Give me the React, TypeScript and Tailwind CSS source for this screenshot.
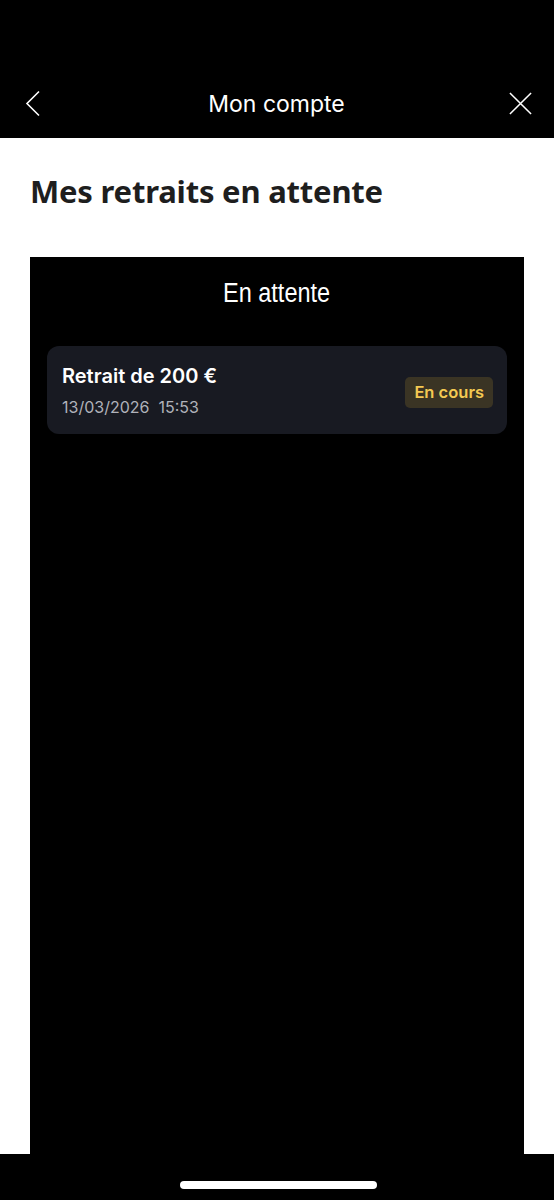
export default function App() {
    return (
        <div className="flex h-[1200px] w-[554px] flex-col bg-white" style={{ fontFamily: "'Noto Sans', sans-serif" }}>
            <header className="flex h-[138px] shrink-0 items-end bg-black pb-[17px]">
                <div className="flex w-full items-center justify-between pr-[21px] pl-[25px]">
                    <svg width="16" height="27" viewBox="0 0 16 27" fill="none" stroke="white" strokeWidth="1.6">
                        <path d="M14 1.5 L2 13.5 L14 25.5" />
                    </svg>
                    <div className="ml-[4px] font-['Inter',sans-serif] text-[23px] font-normal text-white">Mon compte</div>
                    <svg width="25" height="25" viewBox="0 0 26 26" fill="none" stroke="white" strokeWidth="1.6">
                        <path d="M2 2 L24 24 M24 2 L2 24" />
                    </svg>
                </div>
            </header>

            <main className="flex flex-1 flex-col px-[30px] pt-[33px]">
                <h1 className="text-[31px] leading-[40px] font-bold tracking-[-0.2px] text-[#1e1e1e]">Mes retraits en attente</h1>

                <section className="mt-[46px] flex flex-1 flex-col bg-black px-[17px] pt-[18px]">
                    <h2 className="text-center font-['Liberation_Sans',sans-serif] text-[27px] leading-[36px] text-white">
                        <span className="inline-block scale-x-[0.87]">En attente</span>
                    </h2>

                    <div className="mt-[35px] flex items-center justify-between rounded-[12px] bg-[#181a22] pt-[16px] pr-[14px] pb-[13px] pl-[15px] font-['Inter',sans-serif]">
                        <div className="flex flex-col">
                            <span className="text-[20px] leading-[28px] font-semibold text-white">Retrait de 200 €</span>
                            <span className="mt-[3px] text-[16px] leading-[28px] whitespace-pre text-[#b0b2ba]">13/03/2026  15:53</span>
                        </div>
                        <span className="mt-[2px] rounded-[5px] bg-[#3a3424] px-[9px] py-[4px] text-[16.5px] leading-[23px] font-semibold text-[#f4c952]">
                            En cours
                        </span>
                    </div>
                </section>
            </main>

            <footer className="flex h-[46px] shrink-0 items-start justify-center bg-black pt-[27px]">
                <div className="ml-[2px] h-[8px] w-[197px] rounded-full bg-white" />
            </footer>
        </div>
    );
}
